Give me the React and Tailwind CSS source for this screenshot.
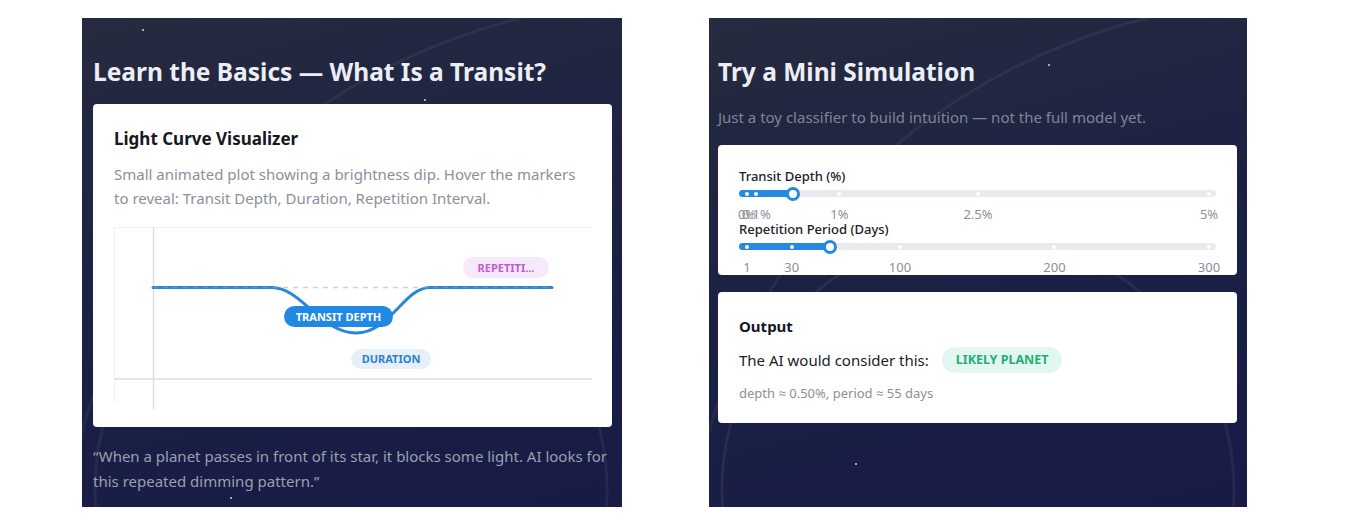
import React from "react";

const FONT = { fontFamily: '"Segoe UI", "Noto Sans", "Open Sans", sans-serif' };

const depthMarks = [
  { v: 0, l: "0%" },
  { v: 0.1, l: "0.1%" },
  { v: 1, l: "1%" },
  { v: 2.5, l: "2.5%" },
  { v: 5, l: "5%" },
];

const periodMarks = [
  { v: 1, l: "1" },
  { v: 30, l: "30" },
  { v: 100, l: "100" },
  { v: 200, l: "200" },
  { v: 300, l: "300" },
];

function SpaceBackdrop({ stars }) {
  return (
    <svg className="absolute inset-0 w-full h-full pointer-events-none" aria-hidden="true">
      <circle cx="269" cy="472" r="256" fill="none" stroke="#ffffff" strokeOpacity="0.06" strokeWidth="3" />
      <ellipse cx="600" cy="560" rx="620" ry="580" fill="none" stroke="#ffffff" strokeOpacity="0.05" strokeWidth="3" />
      {stars.map(([x, y], i) => (
        <circle key={i} cx={x} cy={y} r="1" fill="#ffffff" fillOpacity="0.8" />
      ))}
    </svg>
  );
}

function MarkSlider({ label, marks, min, max, value }) {
  const pct = (v) => ((v - min) / (max - min)) * 100;
  const p = pct(value);
  return (
    <div>
      <div className="h-4 text-[13px] leading-4 font-medium text-[#1d2026]">{label}</div>
      <div className="relative mt-[6px] h-[7px] rounded-full bg-[#e8eaed]">
        <div className="absolute inset-y-0 left-2 right-[7px]">
          <div
            className="absolute inset-y-0 -left-2 rounded-full bg-[#2589e2]"
            style={{ width: `calc(${p}% + 8px)` }}
          />
          {marks.map((m) => (
            <div
              key={m.l}
              className="absolute top-1/2 w-[4px] h-[4px] -translate-x-1/2 -translate-y-1/2 rounded-full bg-white"
              style={{ left: `${pct(m.v)}%` }}
            />
          ))}
          <div
            className="absolute top-1/2 w-[14px] h-[14px] -translate-x-1/2 -translate-y-1/2 rounded-full bg-white border-[3px] border-[#2589e2]"
            style={{ left: `${p}%` }}
          />
        </div>
      </div>
      <div className="relative mt-[10px] mx-2 mr-[7px] h-[14px]">
        {marks.map((m) => (
          <span
            key={m.l}
            className="absolute top-0 -translate-x-1/2 text-[13px] leading-[14px] text-[#8b9098] whitespace-nowrap"
            style={{ left: `${pct(m.v)}%` }}
          >
            {m.l}
          </span>
        ))}
      </div>
    </div>
  );
}

function LightCurve() {
  return (
    <div className="relative mt-[17px] h-[182px] w-[478px]">
      <svg width="478" height="182" viewBox="0 0 478 182" className="absolute inset-0">
        <line x1="0" y1="0.5" x2="478" y2="0.5" stroke="#f0f1f3" />
        <line x1="0.5" y1="0" x2="0.5" y2="176" stroke="#f0f1f3" />
        <line x1="39.5" y1="0" x2="39.5" y2="182" stroke="#dcdde0" strokeWidth="1.5" />
        <line x1="0" y1="152" x2="478" y2="152" stroke="#dcdde0" strokeWidth="1.5" />
        <path
          d="M39 60.5 H158 C187 60.5 207 106 242 106 C276 106 290 60.5 316 60.5 H438"
          fill="none"
          stroke="#2b86d9"
          strokeWidth="3"
          strokeLinecap="round"
        />
        <line
          x1="39"
          y1="60.5"
          x2="438"
          y2="60.5"
          stroke="#9aa3ad"
          strokeOpacity="0.5"
          strokeWidth="1.5"
          strokeDasharray="5 5"
        />
      </svg>
      <span className="absolute left-[170px] top-[79px] h-[21px] w-[109px] rounded-full bg-[#2189e3] text-white text-[11px] font-bold leading-[21px] text-center">
        TRANSIT DEPTH
      </span>
      <span className="absolute left-[237px] top-[122px] h-[20px] w-[80px] rounded-full bg-[#e5f0fb] text-[#2d7fd4] text-[11px] font-bold leading-[20px] text-center">
        DURATION
      </span>
      <span className="absolute left-[349px] top-[30px] h-[21px] w-[86px] rounded-full bg-[#f6e9fa] text-[#c05ad6] text-[11px] font-bold leading-[21px] text-center">
        REPETITI...
      </span>
    </div>
  );
}

export default function App() {
  return (
    <div className="min-h-screen bg-white pl-[82px] pt-[18px]" style={FONT}>
      <div className="flex gap-[87px]">
        {/* left panel */}
        <section className="relative w-[540px] h-[489px] overflow-hidden bg-[linear-gradient(165deg,#262b3f_0%,#1b2045_55%,#171b46_100%)] pl-[11px] pr-[10px]">
          <SpaceBackdrop stars={[[61, 12], [343, 82], [149, 480]]} />
          <div className="relative">
            <h2 className="pt-[38px] text-[24.5px] leading-8 font-bold text-[#eceef5]">
              Learn the Basics — What Is a Transit?
            </h2>
            <div className="mt-4 rounded bg-white px-[21px] pt-[21px] pb-[18px]">
              <h3 className="text-[17px] leading-7 font-bold text-[#16181d]">Light Curve Visualizer</h3>
              <p className="mt-[9px] text-[15px] leading-6 text-[#8c9099]">
                Small animated plot showing a brightness dip. Hover the markers to reveal: Transit Depth, Duration,
                Repetition Interval.
              </p>
              <LightCurve />
            </div>
            <p className="mt-[17px] text-[15px] leading-[25px] text-[#9aa0ae]">
              “When a planet passes in front of its star, it blocks some light. AI looks for this repeated dimming
              pattern.”
            </p>
          </div>
        </section>

        {/* right panel */}
        <section className="relative w-[538px] h-[489px] overflow-hidden bg-[linear-gradient(165deg,#262b3f_0%,#1b2045_55%,#171b46_100%)] pl-[9px] pr-[10px]">
          <SpaceBackdrop stars={[[340, 47], [147, 446]]} />
          <div className="relative">
            <h2 className="pt-[38px] text-[24.5px] leading-8 font-bold text-[#eceef5]">Try a Mini Simulation</h2>
            <p className="mt-[17px] text-[15px] leading-6 text-[#7f8596]">
              Just a toy classifier to build intuition — not the full model yet.
            </p>
            <div className="mt-4 rounded bg-white px-[21px] pt-[23px] pb-[1px]">
              <MarkSlider label="Transit Depth (%)" marks={depthMarks} min={0} max={5} value={0.5} />
              <MarkSlider label="Repetition Period (Days)" marks={periodMarks} min={1} max={300} value={55} />
            </div>
            <div className="mt-[17px] rounded bg-white px-[21px] pt-[22px] pb-[20px]">
              <h3 className="text-[15px] leading-6 font-bold text-[#16181d]">Output</h3>
              <div className="mt-[9px] flex items-center gap-[13px]">
                <span className="text-[15px] text-[#1d2026]">The AI would consider this:</span>
                <span className="h-[26px] rounded-full bg-[#e3f6ef] px-[14px] text-[12.5px] font-bold leading-[26px] text-[#1fae76]">
                  LIKELY PLANET
                </span>
              </div>
              <p className="mt-[10px] text-[13px] leading-5 text-[#8b9098]">depth ≈ 0.50%, period ≈ 55 days</p>
            </div>
          </div>
        </section>
      </div>
    </div>
  );
}
